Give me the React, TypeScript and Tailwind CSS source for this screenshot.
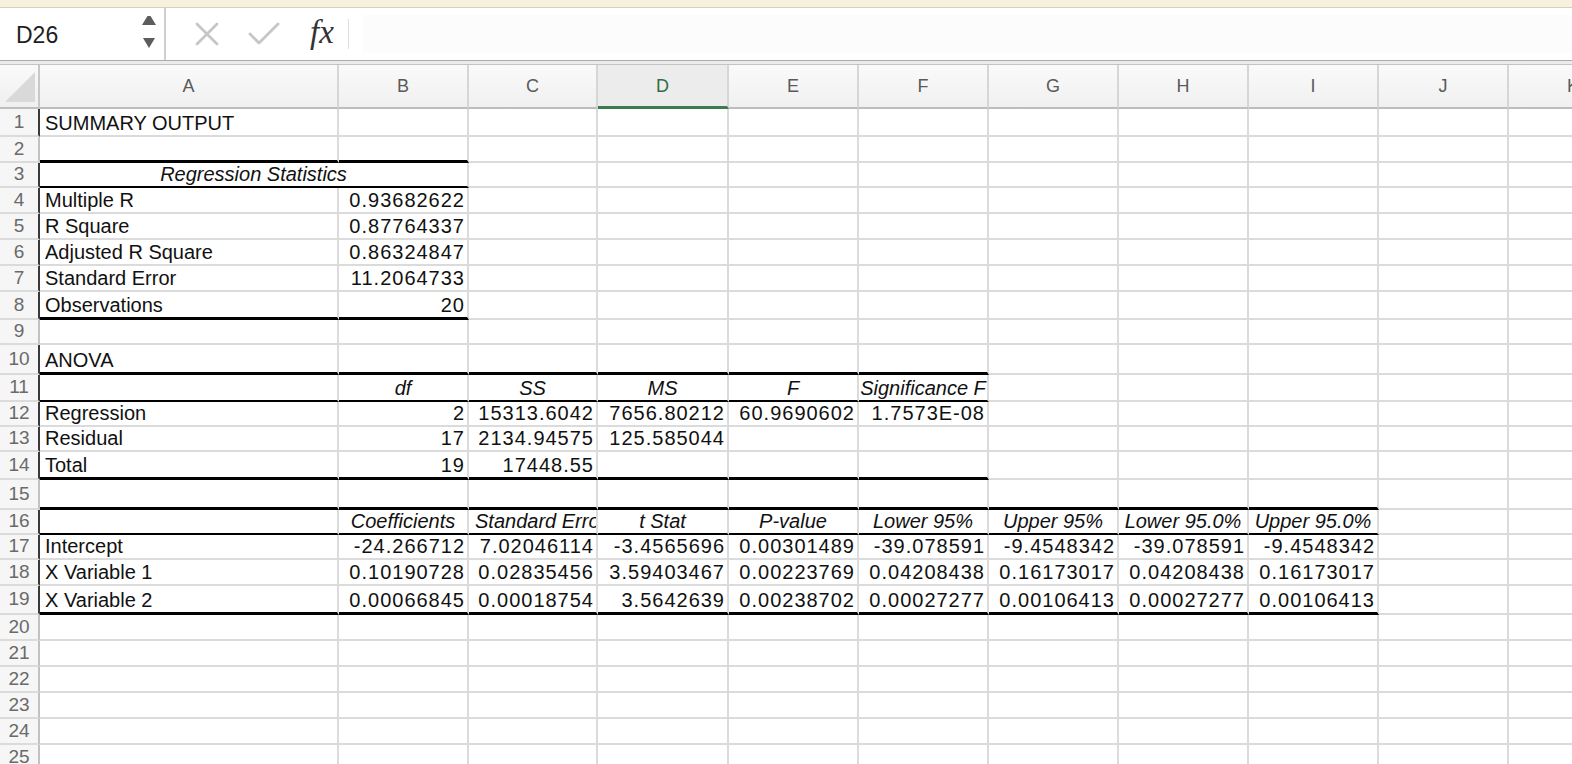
import React from "react";

type Cell = { t: string; a?: "l" | "r" | "c"; i?: boolean; clip?: boolean };

const COLS = ["A", "B", "C", "D", "E", "F", "G", "H", "I", "J", "K"];
const COLW = [
  "w-[299px]",
  "w-[130px]",
  "w-[129px]",
  "w-[131px]",
  "w-[130px]",
  "w-[130px]",
  "w-[130px]",
  "w-[130px]",
  "w-[130px]",
  "w-[130px]",
  "w-[130px]",
];
const ROWH = [
  "h-[28px]",
  "h-[26px]",
  "h-[25px]",
  "h-[26px]",
  "h-[26px]",
  "h-[26px]",
  "h-[26px]",
  "h-[28px]",
  "h-[25px]",
  "h-[30px]",
  "h-[27px]",
  "h-[25px]",
  "h-[25px]",
  "h-[28px]",
  "h-[30px]",
  "h-[25px]",
  "h-[25px]",
  "h-[26px]",
  "h-[29px]",
  "h-[26px]",
  "h-[26px]",
  "h-[26px]",
  "h-[26px]",
  "h-[26px]",
  "h-[26px]",
];

const L = (t: string): Cell => ({ t, a: "l" });
const R = (t: string): Cell => ({ t, a: "r" });
const H = (t: string): Cell => ({ t, a: "c", i: true });

const DATA: Record<number, (Cell | null)[]> = {
  1: [L("SUMMARY OUTPUT")],
  4: [L("Multiple R"), R("0.93682622")],
  5: [L("R Square"), R("0.87764337")],
  6: [L("Adjusted R Square"), R("0.86324847")],
  7: [L("Standard Error"), R("11.2064733")],
  8: [L("Observations"), R("20")],
  10: [L("ANOVA")],
  11: [null, H("df"), H("SS"), H("MS"), H("F"), H("Significance F")],
  12: [L("Regression"), R("2"), R("15313.6042"), R("7656.80212"), R("60.9690602"), R("1.7573E-08")],
  13: [L("Residual"), R("17"), R("2134.94575"), R("125.585044")],
  14: [L("Total"), R("19"), R("17448.55")],
  16: [
    null,
    H("Coefficients"),
    { t: "Standard Error", a: "l", i: true, clip: true },
    H("t Stat"),
    H("P-value"),
    H("Lower 95%"),
    H("Upper 95%"),
    H("Lower 95.0%"),
    H("Upper 95.0%"),
  ],
  17: [
    L("Intercept"),
    R("-24.266712"),
    R("7.02046114"),
    R("-3.4565696"),
    R("0.00301489"),
    R("-39.078591"),
    R("-9.4548342"),
    R("-39.078591"),
    R("-9.4548342"),
  ],
  18: [
    L("X Variable 1"),
    R("0.10190728"),
    R("0.02835456"),
    R("3.59403467"),
    R("0.00223769"),
    R("0.04208438"),
    R("0.16173017"),
    R("0.04208438"),
    R("0.16173017"),
  ],
  19: [
    L("X Variable 2"),
    R("0.00066845"),
    R("0.00018754"),
    R("3.5642639"),
    R("0.00238702"),
    R("0.00027277"),
    R("0.00106413"),
    R("0.00027277"),
    R("0.00106413"),
  ],
};

const BOTTOM: Record<number, [number, "thick" | "thin"]> = {
  2: [1, "thick"],
  3: [1, "thin"],
  8: [1, "thick"],
  10: [5, "thick"],
  11: [5, "thin"],
  14: [5, "thick"],
  15: [8, "thick"],
  16: [8, "thin"],
  19: [8, "thick"],
};

const DARK_LEFT = new Set([1, 3, 4, 5, 6, 7, 8, 10, 11, 12, 13, 14, 16, 17, 18, 19]);

function bottomClass(r: number, c: number) {
  const b = BOTTOM[r];
  if (b && c <= b[0]) {
    return b[1] === "thick" ? "border-b-[3px] border-b-black" : "border-b-2 border-b-black";
  }
  return "border-b-2 border-b-[#dbdbdb]";
}

function CellText({ cell }: { cell: Cell | null }) {
  if (!cell) return null;
  const just =
    cell.a === "r" ? "justify-end pr-[2px]" : cell.a === "c" ? "justify-center" : "justify-start pl-[5px]";
  return (
    <div className={`flex h-full w-full items-end overflow-hidden pb-[2px] ${just}`}>
      <span
        className={`whitespace-nowrap text-[20px] leading-[20px] text-[#111] ${cell.i ? "italic" : ""} ${
          cell.clip ? "pl-[1px]" : ""
        } ${cell.a === "r" ? "tracking-[1px]" : ""}`}
      >
        {cell.t}
      </span>
    </div>
  );
}

function Row({ r }: { r: number }) {
  const cells = DATA[r] || [];
  const h = ROWH[r - 1];
  return (
    <div className={`flex ${h}`}>
      <div
        className={`flex w-[40px] shrink-0 items-center justify-center border-b-2 border-b-[#dbdbdb] bg-[#f6f6f6] text-[19px] text-[#6a6a6a] ${
          DARK_LEFT.has(r) ? "border-r-2 border-r-[#3a3a3a]" : "border-r-2 border-r-[#c2c2c2]"
        }`}
      >
        {r}
      </div>
      {r === 3 ? (
        <>
          <div className={`w-[429px] shrink-0 border-r-2 border-r-[#dbdbdb] ${bottomClass(r, 0)}`}>
            <CellText cell={{ t: "Regression Statistics", a: "c", i: true }} />
          </div>
          {COLS.slice(2).map((c, idx) => (
            <div
              key={c}
              className={`${COLW[idx + 2]} shrink-0 border-r-2 border-r-[#dbdbdb] ${bottomClass(r, idx + 2)}`}
            />
          ))}
        </>
      ) : (
        COLS.map((c, idx) => (
          <div
            key={c}
            className={`${COLW[idx]} shrink-0 border-r-2 border-r-[#dbdbdb] ${bottomClass(r, idx)}`}
          >
            <CellText cell={cells[idx] ?? null} />
          </div>
        ))
      )}
    </div>
  );
}

export default function App() {
  const rows = Array.from({ length: 25 }, (_, i) => i + 1);
  return (
    <div className="h-[764px] w-[1572px] overflow-hidden bg-white font-['Liberation_Sans',Arial,sans-serif]">
      <div className="h-[7px] bg-[#f9f1df]" />
      <div className="h-[1px] bg-[#d9cfbd]" />
      <div className="flex h-[52px] items-stretch bg-white">
        <div className="relative flex w-[164px] shrink-0 items-center">
          <span className="pl-[16px] pt-[2px] text-[23px] text-[#1e1e1e]">D26</span>
          <svg className="absolute left-[141px] top-[8px]" width="16" height="36" viewBox="0 0 16 36">
            <polygon points="1,20 8,8.5 15,20" fill="#5c5c5c" transform="translate(0,-11)" />
            <polygon points="2,32 14,32 8,42" fill="#5c5c5c" transform="translate(0,-10)" />
          </svg>
        </div>
        <div className="w-[2px] shrink-0 bg-[#cfcfcf]" />
        <div className="flex flex-1 items-center">
          <svg className="ml-[28px]" width="26" height="26" viewBox="0 0 26 26">
            <path d="M3 3 L23 23 M23 3 L3 23" stroke="#c6c6c6" strokeWidth="2.8" strokeLinecap="round" />
          </svg>
          <svg className="ml-[28px]" width="32" height="26" viewBox="0 0 32 26">
            <path d="M2 13 L11 22 L30 3" stroke="#c6c6c6" strokeWidth="2.8" fill="none" strokeLinecap="round" strokeLinejoin="round" />
          </svg>
          <span className="ml-[30px] pb-[4px] font-['Liberation_Serif',serif] text-[33px] italic leading-none text-[#333]">
            fx
          </span>
          <div className="ml-[14px] h-[30px] w-[1px] bg-[#dedede]" />
          <div className="ml-[14px] h-[38px] flex-1 bg-[#fcfcfc]" />
        </div>
      </div>
      <div className="h-[1px] bg-[#ababab]" />
      <div className="h-[3px] bg-[#ebebeb]" />
      <div className="h-[1px] bg-[#c4c4c4]" />
      <div className="flex h-[44px]">
        <div className="relative w-[40px] shrink-0 border-r-2 border-r-[#c8c8c8] border-b-2 border-b-[#bdbdbd] bg-linear-to-b from-[#fafafa] to-[#efefef]">
          <svg className="absolute left-[4px] top-[6px]" width="32" height="32" viewBox="0 0 32 32">
            <polygon points="1,31 31,31 31,1" fill="#d9d9d9" />
          </svg>
        </div>
        {COLS.map((c, idx) =>
          c === "D" ? (
            <div
              key={c}
              className={`${COLW[idx]} flex shrink-0 items-center justify-center border-r-2 border-r-[#d6d6d6] border-b-[3px] border-b-[#3d7a4c] bg-[#ececec] pt-[2px] text-[18px] text-[#2f6e40]`}
            >
              {c}
            </div>
          ) : (
            <div
              key={c}
              className={`${COLW[idx]} flex shrink-0 items-center justify-center border-r-2 border-r-[#d6d6d6] border-b-2 border-b-[#bdbdbd] bg-linear-to-b from-[#fafafa] to-[#f0f0f0] text-[18px] text-[#5a5a5a]`}
            >
              {c}
            </div>
          )
        )}
      </div>
      {rows.map((r) => (
        <Row key={r} r={r} />
      ))}
    </div>
  );
}
